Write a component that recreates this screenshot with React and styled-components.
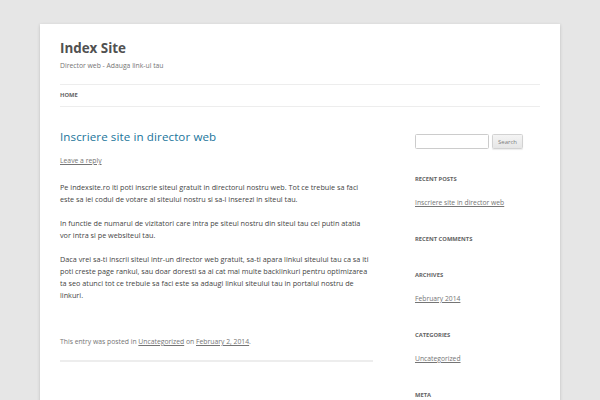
import React from 'react';
import styled, { createGlobalStyle } from 'styled-components';

const GlobalStyle = createGlobalStyle`
  html, body {
    margin: 0;
    padding: 0;
    background: #e6e6e6;
    font-family: "Open Sans", "Liberation Sans", sans-serif;
    color: #444;
  }
  * { box-sizing: border-box; }
`;

const Page = styled.div`
  width: 520px;
  margin: 24px auto 0;
  padding: 0 20px;
  min-height: 420px;
  background: #fff;
  box-shadow: 0 1px 3px rgba(100, 100, 100, 0.3);
`;

const Header = styled.header`
  padding: 12px 0;
`;

const SiteTitle = styled.h1`
  margin: 0;
  font-size: 13.4px;
  line-height: 24px;
  font-weight: 700;
  color: #515151;
`;

const Tagline = styled.h2`
  margin: 0;
  font-size: 6.8px;
  line-height: 12px;
  font-weight: 400;
  color: #757575;
`;

const Nav = styled.nav`
  margin-top: 12px;
  display: flex;
  border-top: 1px solid #ededed;
  border-bottom: 1px solid #ededed;
`;

const NavItem = styled.a`
  margin-right: 20px;
  font-size: 5.8px;
  line-height: 21px;
  font-weight: 700;
  text-transform: uppercase;
  color: #636363;
  text-decoration: none;
`;

const Main = styled.div`
  display: flex;
  justify-content: space-between;
  align-items: flex-start;
  margin-top: 12px;
`;

const Content = styled.main`
  width: 312.5px;
`;

const Article = styled.article`
  padding-bottom: 12px;
  border-bottom: 2px double #ededed;
`;

const EntryHeader = styled.div`
  margin-bottom: 14px;
`;

const EntryTitle = styled.h1`
  margin: 0;
  font-size: 11.6px;
  line-height: 12px;
  font-weight: 400;
  letter-spacing: 0.1px;
  a {
    color: #21759b;
    text-decoration: none;
  }
`;

const CommentsLink = styled.div`
  margin-top: 12px;
  font-size: 6.8px;
  line-height: 12px;
  a {
    color: #757575;
  }
`;

const Paragraph = styled.p`
  margin: 0 0 12px;
  font-size: 7.25px;
  line-height: 12px;
  color: #444;
`;

const EntryMeta = styled.footer`
  margin-top: 35px;
  font-size: 6.8px;
  line-height: 12px;
  color: #757575;
  a {
    color: #757575;
  }
`;

const Sidebar = styled.aside`
  width: 125px;
`;

const Widget = styled.section`
  margin-bottom: 24px;
`;

const SearchForm = styled.form`
  display: flex;
  align-items: flex-start;
  gap: 3px;
  height: 18px;
  padding-top: 3px;
`;

const SearchInput = styled.input`
  width: 74px;
  height: 15px;
  padding: 2px 3px;
  border: 1px solid #ccc;
  border-radius: 1.5px;
  font-family: inherit;
  font-size: 6px;
  outline: none;
`;

const SearchButton = styled.button`
  width: 31px;
  height: 15px;
  padding: 0;
  border: 1px solid #d2d2d2;
  border-radius: 1.5px;
  background: linear-gradient(to bottom, #f4f4f4, #e6e6e6);
  box-shadow: 0 1px 1px rgba(64, 64, 64, 0.1);
  font-family: inherit;
  font-size: 6px;
  color: #7c7c7c;
`;

const WidgetTitle = styled.h3`
  margin: 0 0 ${(p) => (p.$empty ? 0 : 12)}px;
  font-size: 5.8px;
  line-height: 12px;
  font-weight: 700;
  text-transform: uppercase;
  color: #636363;
`;

const WidgetList = styled.ul`
  margin: 0;
  padding: 0;
  list-style: none;
`;

const WidgetItem = styled.li`
  font-size: 6.75px;
  line-height: 12px;
  a {
    color: #757575;
  }
`;

const widgets = [
  { title: 'Recent Posts', items: ['Inscriere site in director web'] },
  { title: 'Recent Comments', items: [] },
  { title: 'Archives', items: ['February 2014'] },
  { title: 'Categories', items: ['Uncategorized'] },
  { title: 'Meta', items: ['Log in'] },
];

export default function App() {
  return (
    <>
      <GlobalStyle />
      <Page>
        <Header>
          <SiteTitle>Index Site</SiteTitle>
          <Tagline>Director web - Adauga link-ul tau</Tagline>
          <Nav>
            <NavItem href="#">Home</NavItem>
          </Nav>
        </Header>
        <Main>
          <Content>
            <Article>
              <EntryHeader>
                <EntryTitle>
                  <a href="#">Inscriere site in director web</a>
                </EntryTitle>
                <CommentsLink>
                  <a href="#">Leave a reply</a>
                </CommentsLink>
              </EntryHeader>
              <Paragraph>
                Pe indexsite.ro iti poti inscrie siteul gratuit in directorul nostru web. Tot ce trebuie sa faci
                este sa iei codul de votare al siteului nostru si sa-l inserezi in siteul tau.
              </Paragraph>
              <Paragraph>
                In functie de numarul de vizitatori care intra pe siteul nostru din siteul tau cel putin atatia
                vor intra si pe websiteul tau.
              </Paragraph>
              <Paragraph>
                Daca vrei sa-ti inscrii siteul intr-un director web gratuit, sa-ti apara linkul siteului tau ca sa iti
                poti creste page rankul, sau doar doresti sa ai cat mai multe backlinkuri pentru optimizarea
                ta seo atunci tot ce trebuie sa faci este sa adaugi linkul siteului tau in portalul nostru de
                linkuri.
              </Paragraph>
              <EntryMeta>
                This entry was posted in <a href="#">Uncategorized</a> on <a href="#">February 2, 2014</a>.
              </EntryMeta>
            </Article>
          </Content>
          <Sidebar>
            <Widget>
              <SearchForm onSubmit={(e) => e.preventDefault()}>
                <SearchInput type="text" />
                <SearchButton type="submit">Search</SearchButton>
              </SearchForm>
            </Widget>
            {widgets.map((w) => (
              <Widget key={w.title}>
                <WidgetTitle $empty={w.items.length === 0}>{w.title}</WidgetTitle>
                {w.items.length > 0 && (
                  <WidgetList>
                    {w.items.map((item) => (
                      <WidgetItem key={item}>
                        <a href="#">{item}</a>
                      </WidgetItem>
                    ))}
                  </WidgetList>
                )}
              </Widget>
            ))}
          </Sidebar>
        </Main>
      </Page>
    </>
  );
}
